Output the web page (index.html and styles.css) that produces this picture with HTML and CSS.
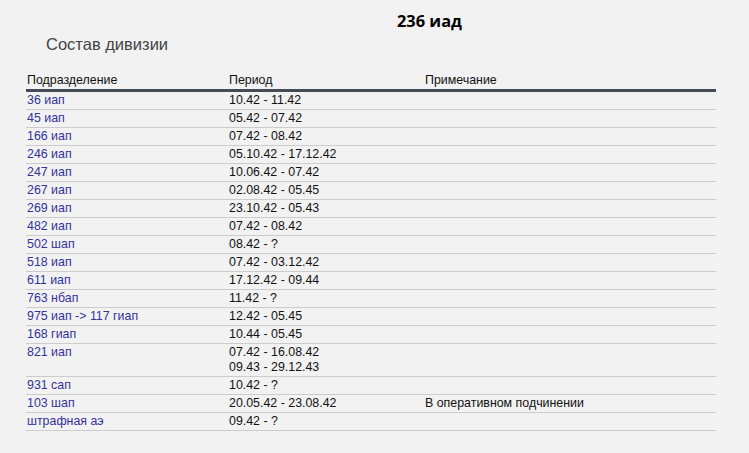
FILE: index.html
```html
<!DOCTYPE html>
<html lang="ru">
<head>
<meta charset="utf-8">
<title>236 иад</title>
<link rel="stylesheet" href="styles.css">
</head>
<body>
<div class="page">
  <h1 class="title">236 иад</h1>
  <h2 class="subtitle">Состав дивизии</h2>
  <table class="units">
    <thead>
      <tr><th class="c1">Подразделение</th><th class="c2">Период</th><th class="c3">Примечание</th></tr>
    </thead>
    <tbody>
      <tr><td><a href="#">36 иап</a></td><td>10.42 - 11.42</td><td></td></tr>
      <tr><td><a href="#">45 иап</a></td><td>05.42 - 07.42</td><td></td></tr>
      <tr><td><a href="#">166 иап</a></td><td>07.42 - 08.42</td><td></td></tr>
      <tr><td><a href="#">246 иап</a></td><td>05.10.42 - 17.12.42</td><td></td></tr>
      <tr><td><a href="#">247 иап</a></td><td>10.06.42 - 07.42</td><td></td></tr>
      <tr><td><a href="#">267 иап</a></td><td>02.08.42 - 05.45</td><td></td></tr>
      <tr><td><a href="#">269 иап</a></td><td>23.10.42 - 05.43</td><td></td></tr>
      <tr><td><a href="#">482 иап</a></td><td>07.42 - 08.42</td><td></td></tr>
      <tr><td><a href="#">502 шап</a></td><td>08.42 - ?</td><td></td></tr>
      <tr><td><a href="#">518 иап</a></td><td>07.42 - 03.12.42</td><td></td></tr>
      <tr><td><a href="#">611 иап</a></td><td>17.12.42 - 09.44</td><td></td></tr>
      <tr><td><a href="#">763 нбап</a></td><td>11.42 - ?</td><td></td></tr>
      <tr><td><a href="#">975 иап -&gt; 117 гиап</a></td><td>12.42 - 05.45</td><td></td></tr>
      <tr><td><a href="#">168 гиап</a></td><td>10.44 - 05.45</td><td></td></tr>
      <tr><td><a href="#">821 иап</a></td><td>07.42 - 16.08.42<br>09.43 - 29.12.43</td><td></td></tr>
      <tr><td><a href="#">931 сап</a></td><td>10.42 - ?</td><td></td></tr>
      <tr><td><a href="#">103 шап</a></td><td>20.05.42 - 23.08.42</td><td>В оперативном подчинении</td></tr>
      <tr><td><a href="#">штрафная аэ</a></td><td>09.42 - ?</td><td></td></tr>
    </tbody>
  </table>
</div>
</body>
</html>
```

FILE: styles.css
```css
html, body {
  margin: 0;
  padding: 0;
  background: #f2f2f2;
}
.page {
  padding-top: 10px;
  font-family: "Liberation Sans", Arial, sans-serif;
}
.title {
  margin: 0 0 0 397px;
  font-family: "Open Sans", "Noto Sans", sans-serif;
  font-weight: 700;
  font-size: 16.4px;
  line-height: 22px;
  color: #000;
}
.subtitle {
  margin: 1px 0 0 46px;
  font-weight: 400;
  font-size: 16.5px;
  line-height: 22px;
  color: #444;
}
.units {
  margin: 18px 0 0 26px;
  width: 690px;
  border-collapse: collapse;
  font-size: 12.4px;
  line-height: 15px;
}
.units th {
  text-align: left;
  font-weight: 400;
  color: #111;
  padding: 0 1px 1px;
  border-bottom: 3px solid #454c55;
}
.units .c1 { width: 200px; }
.units .c2 { width: 194px; }
.units td {
  vertical-align: top;
  padding: 1px 1px 1px;
  border-bottom: 1px solid #cccccc;
  color: #111;
}
.units a {
  color: #333399;
  text-decoration: none;
}
```
